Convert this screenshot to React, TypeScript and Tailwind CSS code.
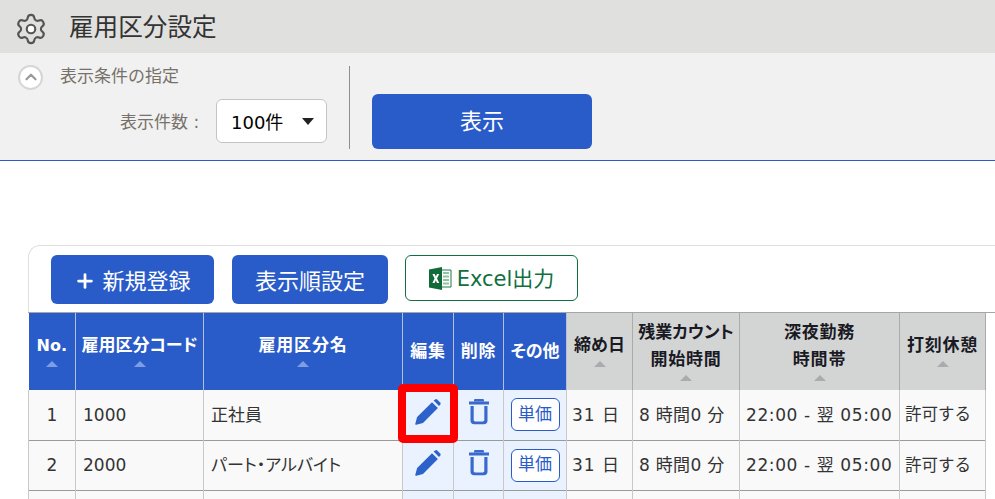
import { Settings, Plus, ChevronUp } from 'lucide-react';

const FONT = "[font-family:'DejaVu_Sans','Noto_Sans_CJK_JP',sans-serif]";

const colWidths = [47, 128, 199, 51, 50, 63, 66, 107, 160, 86];

const rows = [
  { no: 1, code: '1000', name: '正社員' },
  { no: 2, code: '2000', name: 'パート・アルバイト' },
];

// kana sets tighter than kanji in the original header font
const hasKana = (s: string) => /[ぁ-んァ-ヶー]/.test(s);

function SortMark({ onBlue }: { onBlue?: boolean }) {
  return (
    <svg width="12" height="6" viewBox="0 0 12 6" className="mx-auto mt-[2px] block">
      <path d="M6 0L12 6H0z" fill={onBlue ? '#7f9de2' : '#a9abaf'} />
    </svg>
  );
}

function PencilIcon() {
  return (
    <svg width="28" height="28" viewBox="0 0 28 28" className="mx-auto -mt-[5px] block">
      <path d="M19.6 2.6l1.600-1.200a1.600 1.600 0 0 1 2 .1l3 3a1.600 1.600 0 0 1 .1 2l-1.300 1.600z" fill="#2e62cb" />
      <path d="M18 4.200l5.900 5.900L9 25l-6.700 1.800a.8.8 0 0 1-1-1L3.100 19z" fill="#2e62cb" />
    </svg>
  );
}

function TrashIcon() {
  return (
    <svg width="22" height="28" viewBox="0 0 22 28" className="mx-auto -mt-[5px] block">
      <path d="M1 3.500h20v3H1z" fill="#3a69ce" />
      <path d="M6 3.500V2.200C6 1.400 6.600 1 7.400 1h7.200c.8 0 1.400.4 1.400 1.200v1.300z" fill="#3a69ce" />
      <path d="M2.500 8h3.200v13.800c0 1 .6 1.600 1.600 1.600h7.400c1 0 1.600-.6 1.600-1.600V8h3.200v14.700c0 2.200-1.400 3.600-3.600 3.600H6.100c-2.200 0-3.600-1.400-3.600-3.600z" fill="#3a69ce" />
    </svg>
  );
}

function ExcelIcon() {
  return (
    <svg width="23" height="23" viewBox="0 0 23 23" className="block shrink-0">
      <path d="M9 3h13v17H9z" fill="#fff" stroke="#1d7a45" strokeWidth="1" />
      <path d="M14 5h6v2h-6zM14 8.500h6v2h-6zM14 12h6v2h-6zM14 15.500h6v2h-6z" fill="#8fc3a4" />
      <path d="M0 2.500L13 0v23L0 20.500z" fill="#12693a" />
      <path d="M3.400 7h2.300l1.100 2.500L8 7h2.200L8 11.500l2.300 4.500H8L6.800 13.400 5.600 16H3.400l2.200-4.500z" fill="#fff" />
    </svg>
  );
}

function HeaderCell({
  lines,
  tone,
  sort = true,
  latin = false,
}: {
  lines: string[];
  tone: 'blue' | 'gray';
  sort?: boolean;
  latin?: boolean;
}) {
  return (
    <th
      className={
        tone === 'blue'
          ? 'h-[77px] border-r border-[#b4c0d8] bg-[#2a5cc9] p-0 text-center align-middle text-[17px] leading-[27px] font-bold text-white'
          : 'h-[77px] border-r border-[#aaacac] bg-[#d3d5d5] p-0 text-center align-middle text-[17px] leading-[27px] font-bold text-[#1a1a24]'
      }
    >
      <div className={sort ? 'pb-[4px]' : ''}>
        {lines.map((l) => (
          <div
            key={l}
            className={
              latin
                ? 'text-[16px] whitespace-nowrap'
                : hasKana(l)
                  ? "whitespace-nowrap [font-feature-settings:'palt']"
                  : 'tracking-[0.8px] whitespace-nowrap'
            }
          >
            {l}
          </div>
        ))}
        {sort && <SortMark onBlue={tone === 'blue'} />}
      </div>
    </th>
  );
}

export default function App() {
  return (
    <div className={`h-[499px] w-[995px] overflow-hidden bg-white text-[#333] ${FONT}`}>
      <header className="flex h-[53px] items-center bg-[#e0e0de] pt-[4px] pl-[14px]">
        <Settings size={34} strokeWidth={1.5} className="text-[#555] [&>circle]:fill-white" />
        <h1 className="ml-[21px] text-[24.6px] leading-none font-normal text-[#333]">雇用区分設定</h1>
      </header>

      <section className="flex h-[108px] border-b border-[#2a5cc9] bg-[#f1f1f1]">
        <div className="relative mt-[13px] mb-[11px] w-[350px] border-r border-[#8e8e8e]">
          <div className="-mt-[2px] flex h-[26px] items-center pl-[18px]">
            <span className="flex h-[25px] w-[25px] items-center justify-center rounded-full border-2 border-[#d5d5d5] bg-white">
              <ChevronUp size={18} strokeWidth={3} className="text-[#9a9a9a]" />
            </span>
            <span className="ml-[17px] text-[17px] text-[#77716b]">表示条件の指定</span>
          </div>
          <div className="mt-[9px] flex items-center pl-[120px]">
            <span className="w-[96px] pt-[4px] text-[17px] whitespace-nowrap text-[#77716b]">表示件数 :</span>
            <div className="flex h-[44px] w-[111px] items-center justify-between rounded-[6px] border border-[#c4c4c4] bg-white pr-[12px] pl-[14px] text-[18px] text-black">
              <span className="pt-[2px]">100件</span>
              <svg width="12" height="7" viewBox="0 0 12 7">
                <path d="M0 0h12L6 7z" fill="#222" />
              </svg>
            </div>
          </div>
        </div>
        <div className="ml-[22px] pt-[41px]">
          <button className="flex h-[55px] w-[220px] items-center justify-center rounded-[6px] bg-[#2a5cc9] text-[22px] text-white">
            表示
          </button>
        </div>
      </section>

      <section className="mt-[84px] ml-[28px]">
        <div className="flex h-[67px] items-start gap-[18px] rounded-tl-[12px] border-t border-l border-[#dfdfdf] pt-[9px] pl-[22px]">
          <button className="flex h-[49px] w-[163px] items-center justify-center gap-[6px] rounded-[6px] bg-[#2a5cc9] pt-[3px] text-[22px] text-white">
            <Plus size={22} strokeWidth={3} />
            新規登録
          </button>
          <button className="flex h-[49px] w-[156px] items-center justify-center rounded-[6px] bg-[#2a5cc9] pt-[4px] text-[22px] text-white">
            表示順設定
          </button>
          <button className="-ml-px flex h-[46px] w-[173px] items-center justify-center gap-[5px] rounded-[6px] border border-[#0f6f3f] bg-white text-[21px] text-[#0f6f3f]">
            <ExcelIcon />
            <span className="pt-[3px]">Excel出力</span>
          </button>
        </div>

        <div className="relative border-t border-[#a6a6a6]">
          <table className="w-[957px] table-fixed border-collapse">
            <colgroup>
              {colWidths.map((w, i) => (
                <col key={i} style={{ width: w }} />
              ))}
            </colgroup>
            <thead>
              <tr>
                <HeaderCell lines={['No.']} tone="blue" latin />
                <HeaderCell lines={['雇用区分コード']} tone="blue" />
                <HeaderCell lines={['雇用区分名']} tone="blue" />
                <HeaderCell lines={['編集']} tone="blue" sort={false} />
                <HeaderCell lines={['削除']} tone="blue" sort={false} />
                <HeaderCell lines={['その他']} tone="blue" sort={false} />
                <HeaderCell lines={['締め日']} tone="gray" />
                <HeaderCell lines={['残業カウント', '開始時間']} tone="gray" />
                <HeaderCell lines={['深夜勤務', '時間帯']} tone="gray" />
                <HeaderCell lines={['打刻休憩']} tone="gray" />
              </tr>
            </thead>
            <tbody className="text-[17px] text-[#333]">
              {[...rows, null].map((r, i) => (
                <tr key={i} className="h-[50px] border-b border-[#9a9a9a] bg-[#f9f9f9]">
                  <td className="border-x border-[#c8c8c8] pt-[2px] text-center">{r?.no}</td>
                  <td className="border-r border-[#c8c8c8] pt-[2px] pl-[7px]">{r?.code}</td>
                  <td className="border-r border-[#c8c8c8] pt-[2px] pl-[7px] whitespace-nowrap [font-feature-settings:'palt']">{r?.name}</td>
                  <td className="border-r border-[#c8c8c8] bg-[#e9f2fe]">{r && <PencilIcon />}</td>
                  <td className="border-r border-[#c8c8c8] bg-[#e9f2fe]">{r && <TrashIcon />}</td>
                  <td className="border-r border-[#c8c8c8] bg-[#e9f2fe] text-center">
                    {r && (
                      <button className="h-[33px] w-[49px] rounded-[6px] border border-[#2a5cc9] bg-white text-[17px] text-[#2a5cc9]">
                        単価
                      </button>
                    )}
                  </td>
                  <td className="border-r border-[#c8c8c8] pt-[2px] pl-[5px] tracking-[1px] whitespace-nowrap">{r && '31 日'}</td>
                  <td className="border-r border-[#c8c8c8] pt-[2px] pl-[6px] tracking-[0.3px] whitespace-nowrap">{r && '8 時間0 分'}</td>
                  <td className="border-r border-[#c8c8c8] pt-[2px] pl-[6px] tracking-[0.6px] whitespace-nowrap">{r && '22:00 - 翌 05:00'}</td>
                  <td className="border-r border-[#c8c8c8] pt-[2px] pl-[5px] text-[16.5px] whitespace-nowrap">{r && '許可する'}</td>
                </tr>
              ))}
            </tbody>
          </table>
          {/* highlight drawn over the first edit cell */}
          <div className="absolute top-[71px] left-[370px] h-[59px] w-[60px] rounded-[5px] border-[8px] border-[#ff0000]" />
        </div>
      </section>
    </div>
  );
}
